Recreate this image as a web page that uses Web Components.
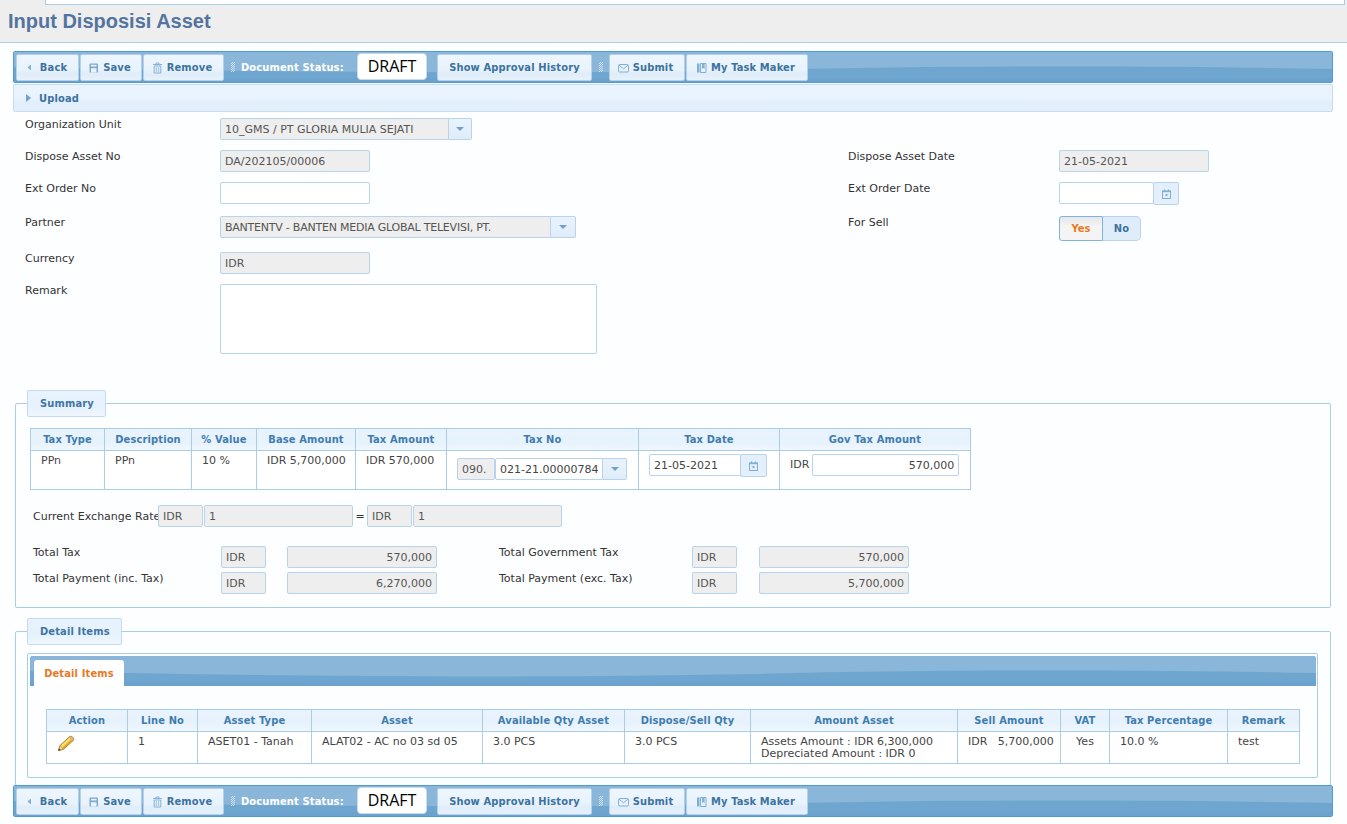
<!DOCTYPE html>
<html lang="en">
<head>
<meta charset="UTF-8">
<title>Input Disposisi Asset</title>
<style>
  body{ margin:0; background:#fdfeff; font:11px "DejaVu Sans",sans-serif; color:#333; height:824px; overflow:hidden; }
</style>
</head>
<body>
<page-title text="Input Disposisi Asset"></page-title>
<form-toolbar style="margin-top:8px"></form-toolbar>
<upload-panel></upload-panel>

<form-grid>
  <form-label>Organization Unit</form-label>
  <combo-field style="grid-column:2 / 5" value="10_GMS / PT GLORIA MULIA SEJATI" w="229" btn="23" disabled></combo-field>

  <form-label>Dispose Asset No</form-label>
  <text-field w="150" value="DA/202105/00006" disabled></text-field>
  <form-label>Dispose Asset Date</form-label>
  <text-field w="150" value="21-05-2021" disabled></text-field>

  <form-label>Ext Order No</form-label>
  <text-field w="150"></text-field>
  <form-label>Ext Order Date</form-label>
  <date-field w="95" btn="26"></date-field>

  <form-label>Partner</form-label>
  <combo-field style="letter-spacing:-.23px" value="BANTENTV - BANTEN MEDIA GLOBAL TELEVISI, PT." w="331" btn="25" disabled></combo-field>
  <form-label>For Sell</form-label>
  <yes-no></yes-no>

  <form-label>Currency</form-label>
  <text-field style="grid-column:2 / 5" w="150" value="IDR" disabled></text-field>

  <form-label>Remark</form-label>
  <text-area w="377" h="70" style="grid-column:2 / 5"></text-area>
</form-grid>

<group-box caption="Summary" style="margin-top:36px">
  <data-table cols="74px 87px 65px 99px 91px 192px 141px 191px">
    <t-h>Tax Type</t-h><t-h>Description</t-h><t-h>% Value</t-h><t-h>Base Amount</t-h><t-h>Tax Amount</t-h><t-h>Tax No</t-h><t-h>Tax Date</t-h><t-h>Gov Tax Amount</t-h>
    <t-d style="min-height:39px">PPn</t-d><t-d>PPn</t-d><t-d>10 %</t-d><t-d>IDR 5,700,000</t-d><t-d>IDR 570,000</t-d>
    <t-d>
      <inline-row style="margin-top:3px"><text-field w="38" value="090." disabled></text-field><combo-field value="021-21.00000784" w="108" btn="24"></combo-field></inline-row>
    </t-d>
    <t-d><date-field w="92" btn="27" value="21-05-2021" style="margin-top:-1px"></date-field></t-d>
    <t-d><inline-row style="margin-top:-1px"><span style="padding-right:3px">IDR</span><text-field w="147" value="570,000" right></text-field></inline-row></t-d>
  </data-table>

  <rate-row>
    <span style="width:125px;white-space:nowrap">Current Exchange Rate</span>
    <text-field w="45" value="IDR" disabled></text-field>
    <text-field w="149" value="1" disabled style="margin-left:1px"></text-field>
    <span style="width:14px;text-align:center">=</span>
    <text-field w="45" value="IDR" disabled></text-field>
    <text-field w="149" value="1" disabled style="margin-left:1px"></text-field>
  </rate-row>

  <total-grid>
    <form-label>Total Tax</form-label>
    <text-field w="45" value="IDR" disabled></text-field>
    <text-field w="150" value="570,000" right disabled></text-field>
    <form-label>Total Government Tax</form-label>
    <text-field w="45" value="IDR" disabled></text-field>
    <text-field w="150" value="570,000" right disabled></text-field>

    <form-label>Total Payment (inc. Tax)</form-label>
    <text-field w="45" value="IDR" disabled></text-field>
    <text-field w="150" value="6,270,000" right disabled></text-field>
    <form-label>Total Payment (exc. Tax)</form-label>
    <text-field w="45" value="IDR" disabled></text-field>
    <text-field w="150" value="5,700,000" right disabled></text-field>
  </total-grid>
</group-box>

<group-box caption="Detail Items" tail style="margin-top:10px">
  <tab-box caption="Detail Items">
    <data-table cols="81px 70px 114px 171px 142px 126px 207px 103px 49px 118px 72px">
      <t-h>Action</t-h><t-h>Line No</t-h><t-h>Asset Type</t-h><t-h>Asset</t-h><t-h>Available Qty Asset</t-h><t-h>Dispose/Sell Qty</t-h><t-h>Amount Asset</t-h><t-h>Sell Amount</t-h><t-h>VAT</t-h><t-h>Tax Percentage</t-h><t-h>Remark</t-h>
      <t-d style="min-height:32px"><svg width="18" height="17" viewBox="0 0 18 17" style="display:block;margin:-1px 0 0 0">
        <path d="M1.500 15.500 3 10.500 12.500 1.800a2 2 0 0 1 2.700 0l1 1.100a2 2 0 0 1-.1 2.700L6.500 14.300z" fill="#f6c63a" stroke="#a9772a" stroke-width=".9"/>
        <path d="M4.300 11.600 13 3.600" stroke="#fdeb9a" stroke-width="1.400"/>
        <path d="M6 13.300 14.600 5.300" stroke="#dd9b1e" stroke-width="1.100"/>
        <path d="M12.300 2 16.200 5.700l.3-1-.9-2.300-1.800-.8z" fill="#f0c9a8" stroke="#b98a55" stroke-width=".6"/>
        <path d="M3 10.500 6.500 14.300 1.500 15.500z" fill="#f5dcb0" stroke="#a9772a" stroke-width=".6"/>
        <path d="M1.300 15.700 2 13.200 3.800 14.900z" fill="#5a3a12"/>
      </svg></t-d>
      <t-d>1</t-d><t-d>ASET01 - Tanah</t-d><t-d>ALAT02 - AC no 03 sd 05</t-d><t-d>3.0 PCS</t-d><t-d>3.0 PCS</t-d>
      <t-d>Assets Amount : IDR 6,300,000<br>Depreciated Amount : IDR 0</t-d>
      <t-d>IDR&nbsp;&nbsp;&nbsp;5,700,000</t-d><t-d center>Yes</t-d><t-d>10.0 %</t-d><t-d>test</t-d>
    </data-table>
  </tab-box>
</group-box>
<form-toolbar style="margin-top:-1px"></form-toolbar>

<script>
  const ICONS = {
    back: '<path d="M7 3.500v6L3.500 6.500z" fill="#7fb0d6"/>',
    save: '<path d="M2.500 3.500a1 1 0 0 1 1-1h6.500a1 1 0 0 1 1 1V11.500H2.500z" fill="#7fa9cd"/><rect x="4" y="3.800" width="5.500" height="1.700" fill="#eaf3fb"/><rect x="4" y="7.200" width="5.500" height="4.300" fill="#eaf3fb"/>',
    remove: '<path d="M2 3.500h9M5 3.300V2h3v1.300" fill="none" stroke="#86b3d7"/><path d="M3.200 5h6.600v7H3.200z" fill="none" stroke="#86b3d7"/><path d="M5.300 6v5M7.700 6v5" stroke="#86b3d7" stroke-width=".8"/>',
    mail: '<rect x="1.500" y="3.500" width="10" height="7.500" rx="1.200" fill="none" stroke="#7fb0d6"/><path d="M2 4.200l4.500 3.600L11 4.200" fill="none" stroke="#7fb0d6"/>',
    book: '<path d="M2 2.500h2.500v9H2z" fill="#7fb0d6"/><path d="M5.500 2.500h5.500v9H5.500z" fill="none" stroke="#7fb0d6"/><path d="M7 2.500h2.600v5.500L8.300 7 7 8z" fill="#7fb0d6"/>',
    cal: '<rect x="2.500" y="4" width="8" height="7.500" fill="none" stroke="#7fb0d6"/><path d="M2.500 4.500h8" stroke="#7fb0d6" stroke-width="1.400"/><path d="M4.500 2.500v2M8.500 2.500v2" stroke="#7fb0d6" stroke-width="1.200"/><rect x="5.500" y="7" width="2" height="2" fill="#7fb0d6"/>'
  }
  const icon = n => `<svg width="13" height="14" viewBox="0 0 13 14" style="display:block;flex:none">${ICONS[n]}</svg>`
  const FONT = `font:11px "DejaVu Sans",sans-serif;`
  const BOLD = `font:bold 11px "DejaVu Sans Condensed","DejaVu Sans",sans-serif;letter-spacing:.15px;`

  // every element renders once from its attributes
  class Base extends HTMLElement {
    connectedCallback(){
      if(this.shadowRoot) return
      this.attachShadow({ mode:'open' }).innerHTML = this.render()
    }
  }
  const def = (name, render) => customElements.define(name, class extends Base {
    render(){ return render(this) }
  })

  def('page-title', el => `<style>
    :host{ display:block; height:42px; background:#eee; border-bottom:1px solid #a9cde6; }
    .strip{ height:4px; margin:0 2px 0 45px; background:#fff; border:1px solid #a9cde6; border-width:0 1px 1px 1px; }
    h1{ margin:0; padding:3px 0 0 8px; font:bold 20px/26px "Liberation Sans",sans-serif; color:#5474a0; }
  </style><div class="strip"></div><h1>${el.getAttribute('text')}</h1>`)

  def('wave-bar', () => `<style>
    :host{ display:block; position:relative; background:#6fa6d0; overflow:hidden; }
    svg{ position:absolute; left:0; top:0; width:100%; height:100%; }
    .in{ position:relative; display:flex; align-items:flex-start; height:100%; }
  </style><svg viewBox="0 0 1000 30" preserveAspectRatio="none"><path d="M0 0H1000V17C880 14 720 13 560 18C400 22 200 21 0 15z" fill="#89b6d9"/><path d="M0 26H1000V30H0z" fill="#6ba3ce"/></svg><div class="in"><slot></slot></div>`)

  def('tool-button', el => `<style>
    :host{ display:block; height:27px; box-sizing:border-box; margin-right:1px; border:1px solid #b4d0ea; border-radius:2px;
      background:linear-gradient(#eef6fd 0,#e9f3fc 55%,#dfedfa 75%,#e7f1fb 100%); }
    div{ height:25px; display:flex; align-items:center; justify-content:center; gap:3px; ${BOLD} color:#3b729f; white-space:nowrap; }
    div.ic{ padding-right:4px; }
  </style><div class="${el.getAttribute('icon') ? 'ic' : ''}">${el.getAttribute('icon') ? icon(el.getAttribute('icon')) : ''}<slot></slot></div>`)

  def('bar-grip', () => `<style>
    :host{ display:block; width:4px; height:10px; margin:8px 6px 0 6px; background:repeating-conic-gradient(#cfe1f0 0 25%,transparent 0 50%) 0 0/2px 2px; }
  </style>`)

  def('form-toolbar', () => `<style>
    :host{ display:block; position:relative; margin:0 14px 0 13px; border:1px solid #4f9bd6; border-radius:2px; height:29px; padding:1px 0 0 0; box-sizing:content-box; }
    wave-bar{ position:absolute; inset:0; }
    .items{ position:relative; display:flex; align-items:flex-start; padding:1px 0 0 2px; }
    .st{ ${BOLD} line-height:27px; color:#fff; white-space:nowrap; width:116px; }
    .draft{ width:70px; height:27px; margin:-1px 10px 0 0; box-sizing:border-box; background:#fff; border:1px solid #c9dcec; border-radius:4px;
      font:16px/24px "Open Sans",sans-serif; color:#000; text-align:center; }
  </style><wave-bar></wave-bar><div class="items">
    <tool-button icon="back" style="width:63px">Back</tool-button>
    <tool-button icon="save" style="width:62px">Save</tool-button>
    <tool-button icon="remove" style="width:81px">Remove</tool-button>
    <bar-grip></bar-grip>
    <span class="st">Document Status:</span>
    <span class="draft">DRAFT</span>
    <tool-button style="width:155px">Show Approval History</tool-button>
    <bar-grip></bar-grip>
    <tool-button icon="mail" style="width:76px">Submit</tool-button>
    <tool-button icon="book" style="width:122px">My Task Maker</tool-button>
  </div>`)

  def('upload-panel', () => `<style>
    :host{ display:flex; align-items:center; gap:8px; height:26px; margin:1px 14px 0 13px; padding-left:12px; border:1px solid #c8dcee; border-radius:2px;
      background:linear-gradient(#eaf4fe 0,#e8f3fd 50%,#e1eefb 70%,#e4f0fc 100%); ${BOLD} color:#3b729f; }
    i{ width:0; height:0; border-left:5px solid #6fa3cc; border-top:4px solid transparent; border-bottom:4px solid transparent; }
  </style><i></i><span>Upload</span>`)

  def('form-grid', () => `<style>
    :host{ display:grid; grid-template-columns:195px 628px 211px 1fr; grid-template-rows:32px 32px 34px 36px 32px 70px; padding:6px 0 0 25px; }
  </style><slot></slot>`)

  def('form-label', () => `<style>
    :host{ display:block; padding-top:0; line-height:13px; white-space:nowrap; color:#333; }
  </style><slot></slot>`)

  const fieldCss = `.f{ box-sizing:border-box; height:22px; border:1px solid #b9d3ea; border-radius:2px; padding:0 4px; ${FONT} line-height:22px; letter-spacing:inherit; color:#444; white-space:nowrap; overflow:hidden; background:#fff; }
    .f.dis{ background:#eee; color:#555; }
    .f.r{ text-align:right; }`

  def('text-field', el => `<style>
    :host{ display:block; width:max-content; }
    ${fieldCss}
  </style><div class="f ${el.hasAttribute('disabled')?'dis':''} ${el.hasAttribute('right')?'r':''}" style="width:${el.getAttribute('w')}px">${el.getAttribute('value')||''}</div>`)

  def('text-area', el => `<style>
    :host{ display:block; }
    div{ box-sizing:border-box; background:#fff; border:1px solid #b9d3ea; border-radius:2px; }
  </style><div style="width:${el.getAttribute('w')}px;height:${el.getAttribute('h')}px"></div>`)

  def('combo-field', el => `<style>
    :host{ display:flex; width:max-content; }
    ${fieldCss}
    .f{ border-radius:2px 0 0 2px; }
    .b{ box-sizing:border-box; height:22px; border:1px solid #b9d3ea; border-left:0; border-radius:0 2px 2px 0; background:linear-gradient(#e9f3fc,#dfecf9); display:flex; align-items:center; justify-content:center; }
    .b i{ width:0; height:0; border-top:4px solid #6fa3cc; border-left:4px solid transparent; border-right:4px solid transparent; }
  </style><div class="f ${el.hasAttribute('disabled')?'dis':''}" style="width:${el.getAttribute('w')}px">${el.getAttribute('value')||''}</div><div class="b" style="width:${el.getAttribute('btn')}px"><i></i></div>`)

  def('date-field', el => `<style>
    :host{ display:flex; width:max-content; }
    ${fieldCss}
    .b{ box-sizing:border-box; width:${el.getAttribute('btn')}px; height:23px; margin-left:-1px; border:1px solid #b9d3ea; border-radius:2px; background:#e3effb; display:flex; align-items:center; justify-content:center; }
  </style><div class="f" style="width:${el.getAttribute('w')}px">${el.getAttribute('value')||''}</div><div class="b">${icon('cal')}</div>`)

  def('yes-no', () => `<style>
    :host{ display:flex; width:max-content; height:25px; ${BOLD} line-height:23px; text-align:center; }
    div{ box-sizing:border-box; height:25px; }
    .y{ width:44px; color:#e8791f; background:linear-gradient(#e6e6e6,#f4f4f4 40%); border:1px solid #7fb3e0; border-radius:3px 0 0 3px; }
    .n{ width:38px; color:#3b729f; background:#dfecfa; border:1px solid #b9d3ea; border-left:0; border-radius:0 5px 5px 0; }
  </style><div class="y">Yes</div><div class="n">No</div>`)

  def('group-box', el => `<style>
    :host{ display:block; margin:0 16px 0 15px; }
    fieldset{ margin:0; padding:11px 12px 9px 14px; border:1px solid #a9cde6; border-radius:2px; min-width:0; }
    legend{ box-sizing:border-box; height:27px; margin-left:-3px; padding:0 11px 0 12px; border:1px solid #c4daee; border-radius:2px;
      background:linear-gradient(#e9f3fd 0,#e5f1fc 60%,#eff6fd 100%); ${BOLD} line-height:25px; color:#3f76a5; }
    :host([tail]) fieldset{ padding:8px 12px 7px 11px; }
    :host([tail]) legend{ margin-left:0; }
  </style><fieldset><legend>${el.getAttribute('caption')}</legend><slot></slot></fieldset>`)

  def('tab-box', el => `<style>
    :host{ display:block; border:1px solid #a9cde6; border-radius:2px; padding:2px 1px 13px 2px; }
    wave-bar{ height:30px; border-radius:3px 3px 0 0; }
    .tab{ width:90px; height:26px; margin:4px 0 0 4px; background:#fff; border-radius:3px 3px 0 0; text-align:center; ${BOLD} line-height:27px; color:#e8791f; }
    .body{ padding:23px 16px 0 16px; }
  </style><wave-bar><div class="tab">${el.getAttribute('caption')}</div></wave-bar><div class="body"><slot></slot></div>`)

  def('data-table', el => `<style>
    :host{ display:grid; width:max-content; grid-template-columns:${el.getAttribute('cols')}; border-top:1px solid #a9cde6; border-left:1px solid #a9cde6; }
  </style><slot></slot>`)

  def('t-h', () => `<style>
    :host{ display:block; box-sizing:border-box; height:22px; text-align:center; white-space:nowrap; border-right:1px solid #a9cde6; border-bottom:1px solid #a9cde6;
      background:linear-gradient(#e9f3fd 0,#e6f2fd 60%,#f0f7fe 100%); ${BOLD} line-height:21px; color:#3f7cae; }
  </style><slot></slot>`)

  def('t-d', () => `<style>
    :host{ display:block; box-sizing:border-box; min-height:32px; padding:4px 0 0 10px; line-height:12px; white-space:nowrap; border-right:1px solid #a9cde6; border-bottom:1px solid #a9cde6; color:#444; background:#fff; }
    :host([center]){ padding-left:0; text-align:center; }
  </style><slot></slot>`)

  def('inline-row', () => `<style>:host{ display:flex; align-items:center; }</style><slot></slot>`)

  def('rate-row', () => `<style>
    :host{ display:flex; align-items:center; margin-top:15px; padding-left:3px; }
  </style><slot></slot>`)

  def('total-grid', () => `<style>
    :host{ display:grid; grid-template-columns:188px 66px 212px 193px 67px 150px; grid-auto-rows:26px; margin-top:19px; padding-left:3px; }
  </style><slot></slot>`)
</script>
</body>
</html>
